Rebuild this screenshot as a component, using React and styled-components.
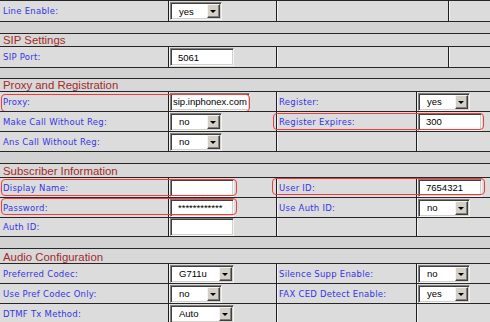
import React from "react";
import styled, { createGlobalStyle } from "styled-components";

const GlobalStyle = createGlobalStyle`
  html, body {
    margin: 0;
    padding: 0;
    background: #dcdcdc;
    overflow: hidden;
  }
`;

const Sheet = styled.div`
  width: 490px;
  height: 322px;
  overflow: hidden;
  background: #dcdcdc;
  font-family: "DejaVu Sans", Verdana, sans-serif;
`;

const Row = styled.div`
  position: relative;
  display: grid;
  grid-template-columns: ${(p) =>
    p.$wide ? "168px 108px 172px 1fr" : "168px 108px 140px 1fr"};
  height: ${(p) => p.$h || 20}px;
  box-sizing: border-box;
  border-top: 1px solid #262626;
  background: #dcdcdc;
`;

const Cell = styled.div`
  display: flex;
  align-items: center;
  box-sizing: border-box;
  min-width: 0;
  padding-left: ${(p) => (p.$first ? 3 : 1)}px;
  border-left: ${(p) => (p.$first ? "none" : "1px solid #1e1e1e")};
  box-shadow: ${(p) => (p.$first ? "none" : "inset 1px 0 #f2f2f2")};
`;

const Label = styled.span`
  color: #3434e6;
  font-size: 8.5px;
  letter-spacing: 0.25px;
  white-space: nowrap;
  padding-left: ${(p) => (p.$first ? 0 : 1)}px;
`;

const Spacer = styled.div`
  height: ${(p) => p.$h || 12}px;
  box-sizing: border-box;
  border-top: 1px solid #262626;
  background: #d2d2d2;
`;

const Section = styled.div`
  height: ${(p) => p.$h || 14}px;
  box-sizing: border-box;
  border-top: 1px solid #262626;
  background: #d8d8d8;
  display: flex;
  align-items: flex-end;
  padding-left: 3px;
  color: #a32a2a;
  font-family: "Liberation Sans", Arial, sans-serif;
  font-size: 11.4px;
  line-height: 12px;
  white-space: nowrap;
`;

const TextBox = styled.input`
  box-sizing: border-box;
  width: ${(p) => p.$w || 64}px;
  height: 18px;
  margin: 0;
  padding: 0 0 0 ${(p) => (p.$pad ?? 7)}px;
  background: #fff;
  border-style: solid;
  border-width: 1px;
  border-color: #808080 #f4f4f4 #f4f4f4 #808080;
  box-shadow: inset 1px 1px #404040, inset -1px -1px #d4d0c8;
  font-family: "Liberation Sans", Arial, sans-serif;
  font-size: 9.5px;
  color: #000;
  outline: none;
`;

const SelectBox = styled.div`
  box-sizing: border-box;
  width: ${(p) => p.$w || 52}px;
  height: 18px;
  display: flex;
  align-items: center;
  justify-content: space-between;
  padding: 0 1px 0 8px;
  background: #fff;
  border-style: solid;
  border-width: 1px;
  border-color: #808080 #f4f4f4 #f4f4f4 #808080;
  box-shadow: inset 1px 1px #404040, inset -1px -1px #d4d0c8;
  font-family: "Liberation Sans", Arial, sans-serif;
  font-size: 9.5px;
  color: #000;
`;

const DropButton = styled.span`
  box-sizing: border-box;
  width: 13px;
  height: 14px;
  background: #d4d0c8;
  border-style: solid;
  border-width: 1px;
  border-color: #f4f4f4 #404040 #404040 #f4f4f4;
  box-shadow: inset -1px -1px #808080;
  display: flex;
  align-items: center;
  justify-content: center;

  &::after {
    content: "";
    width: 0;
    height: 0;
    border-left: 3px solid transparent;
    border-right: 3px solid transparent;
    border-top: 3px solid #000;
    margin: 1px 1px 0 0;
  }
`;

const Callout = styled.div`
  position: absolute;
  left: ${(p) => p.$x}px;
  top: ${(p) => p.$y}px;
  width: ${(p) => p.$w}px;
  height: ${(p) => p.$h}px;
  box-sizing: border-box;
  border: 1px solid #f23c3c;
  border-radius: 4px;
  pointer-events: none;
`;

const Select = ({ value, w }) => (
  <SelectBox $w={w}>
    <span>{value}</span>
    <DropButton />
  </SelectBox>
);

const Field = ({ f }) => {
  if (!f) return null;
  if (f.select) return <Select value={f.select} w={f.w} />;
  return <TextBox readOnly value={f.text ?? ""} $w={f.w} $pad={f.pad} />;
};

const DataRow = ({ label, field, label2, field2, h, wide, callouts = [] }) => (
  <Row $h={h} $wide={wide}>
    <Cell $first>{label && <Label $first>{label}:</Label>}</Cell>
    <Cell>
      <Field f={field} />
    </Cell>
    <Cell>{label2 && <Label>{label2}:</Label>}</Cell>
    <Cell>
      <Field f={field2} />
    </Cell>
    {callouts.map((c, i) => (
      <Callout key={i} $x={c[0]} $y={c[1]} $w={c[2]} $h={c[3]} />
    ))}
  </Row>
);

export default function App() {
  return (
    <Sheet>
      <GlobalStyle />
      <DataRow wide h={21} label="Line Enable" field={{ select: "yes" }} />
      <Spacer $h={12} />
      <Section $h={13}>SIP Settings</Section>
      <DataRow wide h={21} label="SIP Port" field={{ text: "5061" }} />
      <Spacer $h={11} />
      <Section $h={13}>Proxy and Registration</Section>
      <DataRow
        label="Proxy"
        field={{ text: "sip.inphonex.com", w: 80, pad: 2 }}
        label2="Register"
        field2={{ select: "yes" }}
        callouts={[[1, 2, 249, 18]]}
      />
      <DataRow
        label="Make Call Without Reg"
        field={{ select: "no" }}
        label2="Register Expires"
        field2={{ text: "300" }}
        callouts={[[273, 1, 211, 17]]}
      />
      <DataRow label="Ans Call Without Reg" field={{ select: "no" }} />
      <Spacer $h={12} />
      <Section $h={14}>Subscriber Information</Section>
      <DataRow
        label="Display Name"
        field={{ text: "" }}
        label2="User ID"
        field2={{ text: "7654321" }}
        callouts={[
          [1, 1, 236, 17],
          [272, 0, 213, 17],
        ]}
      />
      <DataRow
        label="Password"
        field={{ text: "************" }}
        label2="Use Auth ID"
        field2={{ select: "no" }}
        callouts={[[1, 0, 236, 17]]}
      />
      <DataRow h={19} label="Auth ID" field={{ text: "" }} />
      <Spacer $h={12} />
      <Section $h={15}>Audio Configuration</Section>
      <DataRow
        label="Preferred Codec"
        field={{ select: "G711u", w: 64 }}
        label2="Silence Supp Enable"
        field2={{ select: "no" }}
      />
      <DataRow
        label="Use Pref Codec Only"
        field={{ select: "no" }}
        label2="FAX CED Detect Enable"
        field2={{ select: "yes" }}
      />
      <DataRow label="DTMF Tx Method" field={{ select: "Auto", w: 64 }} />
    </Sheet>
  );
}
